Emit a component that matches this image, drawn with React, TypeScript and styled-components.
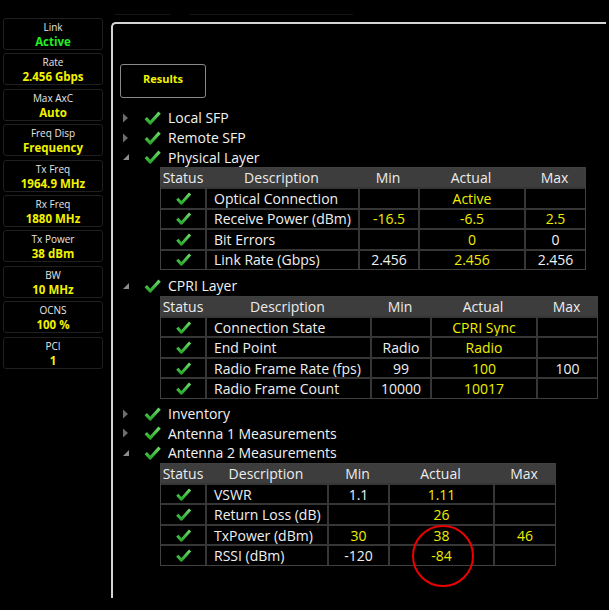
import React from "react";
import styled, { createGlobalStyle } from "styled-components";

const Global = createGlobalStyle`
  html, body { margin: 0; padding: 0; background: #000; }
  body { font-family: "Open Sans", "Noto Sans", sans-serif; color: #f0f0f0; }
  * { box-sizing: border-box; }
`;

const Page = styled.div`
  display: flex;
  width: 609px;
  height: 610px;
  background: #000;
  overflow: hidden;
`;

const Sidebar = styled.div`
  width: 111px;
  padding: 18px 0 0 3px;
  display: flex;
  flex-direction: column;
  gap: 3.4px;
`;

const Card = styled.div`
  width: 100px;
  height: 32px;
  border: 1px solid #1f1f1f;
  border-radius: 3px;
  display: flex;
  flex-direction: column;
  align-items: center;
  padding-top: 2px;
`;

const CardLabel = styled.div`
  font-size: 10px;
  line-height: 13px;
  color: #e6e6e6;
`;

const CardValue = styled.div<{ $green?: boolean }>`
  font-size: 11.5px;
  line-height: 15px;
  font-weight: 700;
  color: ${(p) => (p.$green ? "#22ee22" : "#f2f200")};
`;

const Main = styled.div`
  display: flex;
  flex-direction: column;
`;

const TabStrip = styled.div`
  height: 22px;
  display: flex;
  align-items: flex-start;
  padding: 14px 0 0 4px;
  gap: 20px;
`;

const TabLine = styled.div<{ $w: number }>`
  width: ${(p) => p.$w}px;
  height: 1px;
  background: #161616;
`;

const Panel = styled.div`
  width: 495px;
  height: 576px;
  border-top: 2px solid #d4d4d4;
  border-left: 2px solid #d4d4d4;
  border-top-left-radius: 5px;
  padding: 40px 0 0 7px;
`;

const ResultsButton = styled.div`
  width: 86px;
  height: 34px;
  border: 1px solid #8a8a8a;
  border-radius: 3px;
  display: flex;
  align-items: center;
  justify-content: center;
  padding-bottom: 5px;
  color: #f2f200;
  font-weight: 700;
  font-size: 11px;
`;

const Tree = styled.div`
  margin-top: 10px;
  display: flex;
  flex-direction: column;
`;

const TreeRow = styled.div<{ $gap?: number }>`
  height: 19.7px;
  display: flex;
  align-items: center;
  margin-top: ${(p) => p.$gap || 0}px;
`;

const Expander = styled.div`
  width: 24px;
  height: 19.5px;
  display: flex;
  align-items: center;
  padding-left: 2px;
`;

const Label = styled.span`
  font-size: 14px;
  color: #f2f2f2;
  margin-left: 7px;
  white-space: nowrap;
`;

const TableGrid = styled.div<{ $cols: string }>`
  margin-left: 40px;
  display: grid;
  grid-template-columns: ${(p) => p.$cols};
  border: 1px solid #404040;
  width: max-content;
`;

const HeadCell = styled.div`
  height: 19px;
  background: #3d3d3d;
  color: #ececec;
  font-size: 14px;
  display: flex;
  align-items: center;
  justify-content: center;
  white-space: nowrap;
`;

const Cell = styled.div<{ $align?: "left" | "center"; $yellow?: boolean }>`
  height: 20.5px;
  border-top: 2px solid #363636;
  border-left: 2px solid #363636;
  &:nth-child(5n + 1) { border-left: none; }
  font-size: 14px;
  color: ${(p) => (p.$yellow ? "#eeee00" : "#f0f0f0")};
  display: flex;
  align-items: center;
  justify-content: ${(p) => (p.$align === "left" ? "flex-start" : "center")};
  padding-left: ${(p) => (p.$align === "left" ? "7px" : "0")};
  white-space: nowrap;
`;

const Overlay = styled.div`
  position: absolute;
  left: 412px;
  top: 525px;
  width: 62px;
  height: 62px;
  border: 2.5px solid #ee0000;
  border-radius: 50%;
  pointer-events: none;
`;

const Check = ({ w = 17, h = 14 }: { w?: number; h?: number }) => (
  <svg width={w} height={h} viewBox="0 0 17 14">
    <defs>
      <linearGradient id="cg" x1="0" y1="0" x2="0" y2="1">
        <stop offset="0" stopColor="#6ad86a" />
        <stop offset="1" stopColor="#2aaa2a" />
      </linearGradient>
    </defs>
    <path d="M1.8 7.2 L6.2 12 L15.6 1.6" fill="none" stroke="url(#cg)" strokeWidth="3.2" strokeLinejoin="round" />
  </svg>
);

const Arrow = ({ open }: { open: boolean }) =>
  open ? (
    <svg width="8" height="8" viewBox="0 0 8 8">
      <path d="M7 1 L7 7 L1 7 Z" fill="#8c8c8c" />
    </svg>
  ) : (
    <svg width="7" height="10" viewBox="0 0 7 10">
      <path d="M1 0.5 L6 5 L1 9.5 Z" fill="#6e6e6e" />
    </svg>
  );

type Row = { desc: string; min?: string; minY?: boolean; act?: string; max?: string; maxY?: boolean };

const DataTable = ({ cols, rows }: { cols: string; rows: Row[] }) => (
  <TableGrid $cols={cols}>
    {["Status", "Description", "Min", "Actual", "Max"].map((h) => (
      <HeadCell key={h}>{h}</HeadCell>
    ))}
    {rows.map((r) => (
      <React.Fragment key={r.desc}>
        <Cell><Check w={17} h={13} /></Cell>
        <Cell $align="left">{r.desc}</Cell>
        <Cell $yellow={r.minY}>{r.min ?? ""}</Cell>
        <Cell $yellow>{r.act ?? ""}</Cell>
        <Cell $yellow={r.maxY}>{r.max ?? ""}</Cell>
      </React.Fragment>
    ))}
  </TableGrid>
);

const Node = ({ label, open, gap }: { label: string; open: boolean; gap?: number }) => (
  <TreeRow $gap={gap}>
    <Expander><Arrow open={open} /></Expander>
    <Check />
    <Label>{label}</Label>
  </TreeRow>
);

const cards: { l: string; v: string; g?: boolean }[] = [
  { l: "Link", v: "Active", g: true },
  { l: "Rate", v: "2.456 Gbps" },
  { l: "Max AxC", v: "Auto" },
  { l: "Freq Disp", v: "Frequency" },
  { l: "Tx Freq", v: "1964.9 MHz" },
  { l: "Rx Freq", v: "1880 MHz" },
  { l: "Tx Power", v: "38 dBm" },
  { l: "BW", v: "10 MHz" },
  { l: "OCNS", v: "100 %" },
  { l: "PCI", v: "1" },
];

export default function App() {
  return (
    <>
      <Global />
      <Page>
        <Sidebar>
          {cards.map((c) => (
            <Card key={c.l}>
              <CardLabel>{c.l}</CardLabel>
              <CardValue $green={c.g}>{c.v}</CardValue>
            </Card>
          ))}
        </Sidebar>
        <Main>
          <TabStrip>
            <TabLine $w={55} />
            <TabLine $w={163} />
          </TabStrip>
          <Panel>
            <ResultsButton>Results</ResultsButton>
            <Tree>
              <Node label="Local SFP" open={false} />
              <Node label="Remote SFP" open={false} />
              <Node label="Physical Layer" open />
              <DataTable
                cols="44px 153px 60px 106px 61px"
                rows={[
                  { desc: "Optical Connection", act: "Active" },
                  { desc: "Receive Power (dBm)", min: "-16.5", minY: true, act: "-6.5", max: "2.5", maxY: true },
                  { desc: "Bit Errors", act: "0", max: "0" },
                  { desc: "Link Rate (Gbps)", min: "2.456", act: "2.456", max: "2.456" },
                ]}
              />
              <Node label="CPRI Layer" open gap={6} />
              <DataTable
                cols="44px 165px 60px 106px 61px"
                rows={[
                  { desc: "Connection State", act: "CPRI Sync" },
                  { desc: "End Point", min: "Radio", act: "Radio" },
                  { desc: "Radio Frame Rate (fps)", min: "99", act: "100", max: "100" },
                  { desc: "Radio Frame Count", min: "10000", act: "10017" },
                ]}
              />
              <Node label="Inventory" open={false} gap={5} />
              <Node label="Antenna 1 Measurements" open={false} />
              <Node label="Antenna 2 Measurements" open />
              <DataTable
                cols="44px 122px 61px 105px 62px"
                rows={[
                  { desc: "VSWR", min: "1.1", act: "1.11" },
                  { desc: "Return Loss (dB)", act: "26" },
                  { desc: "TxPower (dBm)", min: "30", minY: true, act: "38", max: "46", maxY: true },
                  { desc: "RSSI (dBm)", min: "-120", act: "-84" },
                ]}
              />
            </Tree>
          </Panel>
        </Main>
        <Overlay />
      </Page>
    </>
  );
}
